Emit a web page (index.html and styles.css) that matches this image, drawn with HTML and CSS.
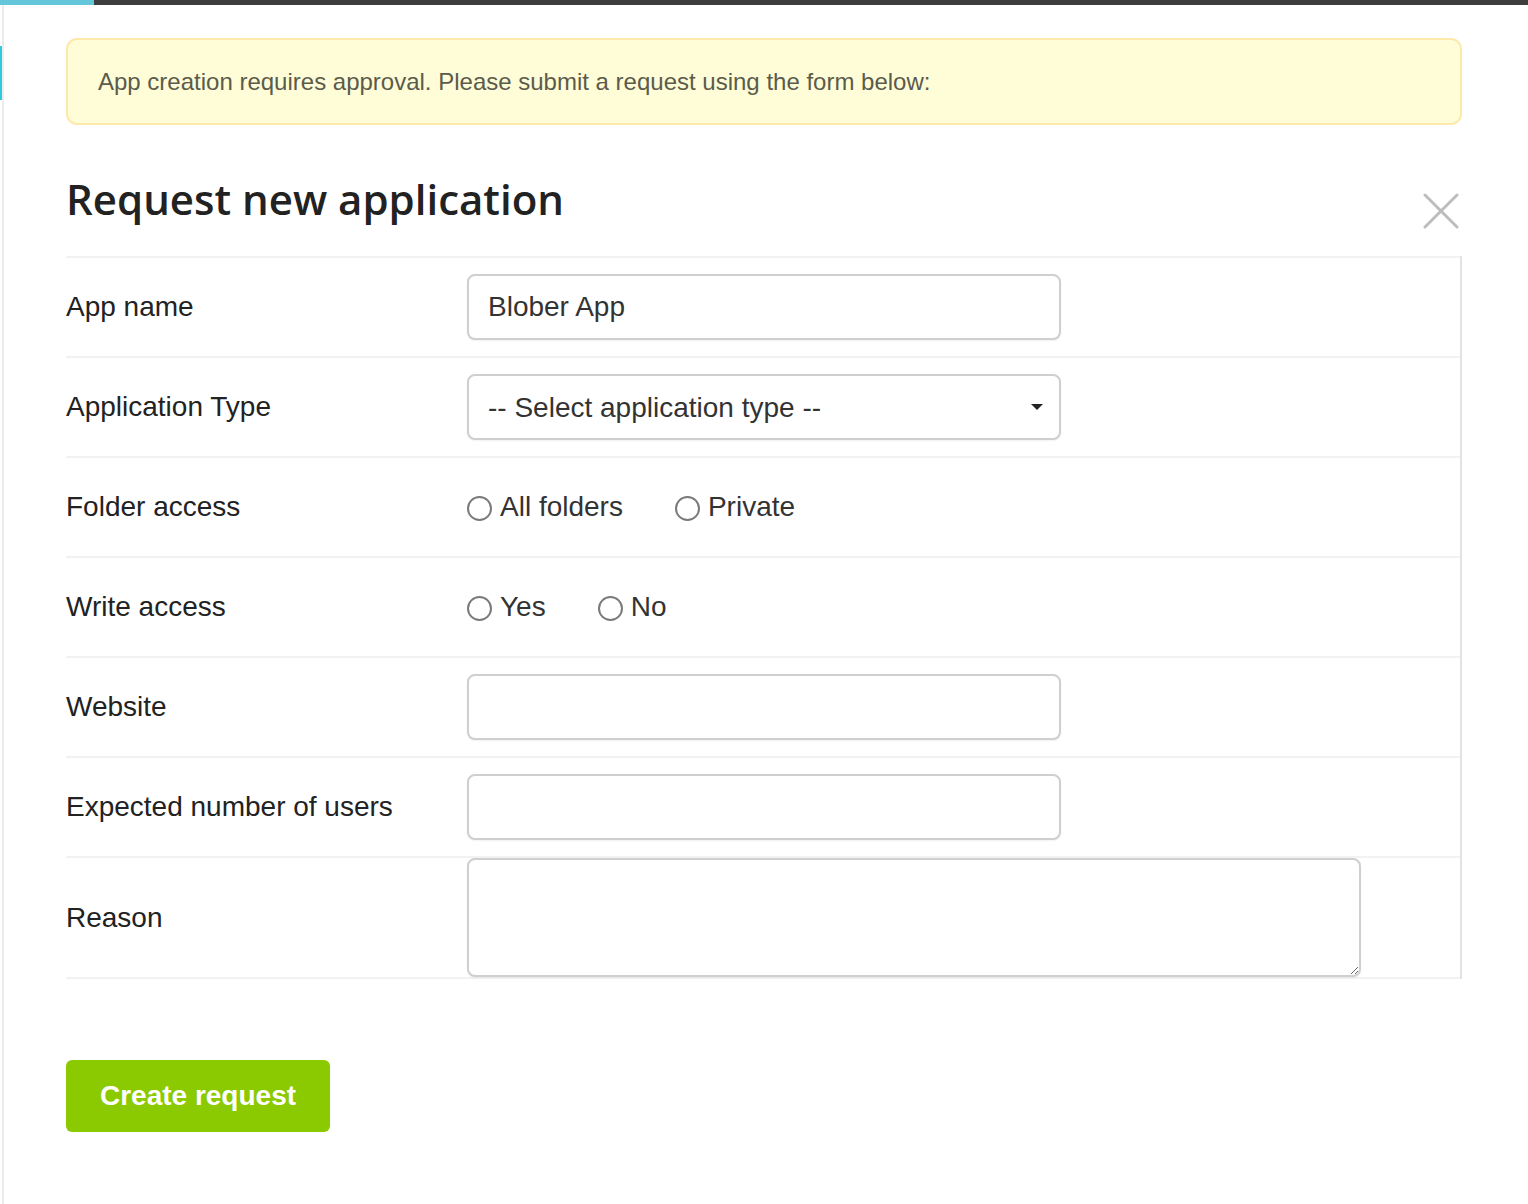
FILE: index.html
```html
<html>
<head>
	<title>Request new application</title>
	<link rel="stylesheet" href="styles.css">
</head>
<body>
	<div id="topbar"><div id="progress"></div></div>
	<div id="page">
		<div id="rail"><div id="railMark"></div></div>
		<div id="content">
			<div class="notice">App creation requires approval. Please submit a request using the form below:</div>

			<div class="header">
				<h1>Request new application</h1>
				<button class="close" title="Close">
					<svg width="36" height="36" viewBox="0 0 36 36">
						<path d="M2 2 L34 34 M34 2 L2 34" stroke="#bdbdbd" stroke-width="3" stroke-linecap="round" fill="none"/>
					</svg>
				</button>
			</div>

			<div class="form">
				<div class="row">
					<div class="label">App name</div>
					<div class="field"><input class="text" type="text" value="Blober App"></div>
				</div>
				<div class="row">
					<div class="label">Application Type</div>
					<div class="field">
						<div class="selectWrap">
							<select class="text">
								<option>-- Select application type --</option>
							</select>
						</div>
					</div>
				</div>
				<div class="row">
					<div class="label">Folder access</div>
					<div class="field options">
						<label class="option"><span class="radio"></span>All folders</label>
						<label class="option"><span class="radio"></span>Private</label>
					</div>
				</div>
				<div class="row">
					<div class="label">Write access</div>
					<div class="field options">
						<label class="option"><span class="radio"></span>Yes</label>
						<label class="option"><span class="radio"></span>No</label>
					</div>
				</div>
				<div class="row">
					<div class="label">Website</div>
					<div class="field"><input class="text" type="text"></div>
				</div>
				<div class="row">
					<div class="label">Expected number of users</div>
					<div class="field"><input class="text" type="text"></div>
				</div>
				<div class="row last">
					<div class="label">Reason</div>
					<div class="field"><textarea class="area"></textarea></div>
				</div>
			</div>

			<button class="submit">Create request</button>
		</div>
	</div>
</body>
</html>
```

FILE: styles.css
```css
*
{
	box-sizing: border-box;
}
body
{
	margin: 0px;
	padding: 0px;
	background: white;
	font-family: "Liberation Sans", Arial, sans-serif;
	color: #222222;
}
#topbar
{
	height: 5px;
	background: #3d3d3d;
}
#progress
{
	width: 94px;
	height: 5px;
	background: #63c6d9;
}
#page
{
	display: flex;
	min-height: 1199px;
}
#rail
{
	width: 4px;
	border-right: 2px solid #ececee;
}
#railMark
{
	width: 2px;
	height: 54px;
	margin-top: 41px;
	background: #2fcadd;
}
#content
{
	width: 1396px;
	margin-left: 62px;
}
.notice
{
	margin-top: 33px;
	padding: 27px 30px;
	line-height: 29px;
	font-size: 24px;
	color: #5b5b4c;
	background: #fffdd7;
	border: 2px solid #fde9a9;
	border-radius: 11px;
}
.header
{
	display: flex;
	justify-content: space-between;
	align-items: flex-start;
	margin: 49px 0px 27px 0px;
}
h1
{
	margin: 0px;
	font-family: "Open Sans", sans-serif;
	font-weight: 600;
	font-size: 42px;
	line-height: 50px;
	color: #222222;
}
.close
{
	margin: 19px 3px 0px 0px;
	padding: 0px;
	border: none;
	background: none;
	width: 36px;
	height: 36px;
}
.form
{
	border-right: 2px solid #e2e2e2;
}
.row
{
	display: grid;
	grid-template-columns: 401px 1fr;
	align-items: center;
	height: 100px;
	border-top: 2px solid #f2f2f2;
}
.row.last
{
	height: auto;
	border-bottom: 2px solid #f2f2f2;
}
.label
{
	font-size: 28px;
	color: #222222;
}
.text
{
	display: block;
	width: 594px;
	height: 66px;
	padding: 0px 19px;
	font-family: "Liberation Sans", Arial, sans-serif;
	font-size: 28px;
	color: #333333;
	background: white;
	border: 2px solid #cfcfcf;
	border-radius: 8px;
	box-shadow: 0px 1px 2px rgba(0, 0, 0, 0.06);
	outline: none;
	appearance: none;
	-webkit-appearance: none;
}
.selectWrap
{
	position: relative;
	width: 594px;
}
.selectWrap::after
{
	content: "";
	position: absolute;
	right: 18px;
	top: 30px;
	border-left: 6px solid transparent;
	border-right: 6px solid transparent;
	border-top: 6px solid #222222;
}
.options
{
	display: flex;
	gap: 52px;
}
.option
{
	display: flex;
	align-items: center;
	gap: 8px;
	font-size: 28px;
	color: #333333;
}
.radio
{
	width: 25px;
	height: 25px;
	border: 2px solid #7a7a7a;
	border-radius: 50%;
	margin-top: 2px;
}
.area
{
	display: block;
	width: 894px;
	height: 119px;
	padding: 10px 19px;
	font-family: "Liberation Sans", Arial, sans-serif;
	font-size: 28px;
	border: 2px solid #cfcfcf;
	border-radius: 8px;
	box-shadow: 0px 1px 2px rgba(0, 0, 0, 0.06);
	outline: none;
}
.submit
{
	margin-top: 81px;
	width: 264px;
	height: 72px;
	padding: 0px;
	font-family: "Liberation Sans", Arial, sans-serif;
	font-weight: bold;
	font-size: 28px;
	color: white;
	background: #8bc900;
	border: none;
	border-radius: 6px;
}
```
